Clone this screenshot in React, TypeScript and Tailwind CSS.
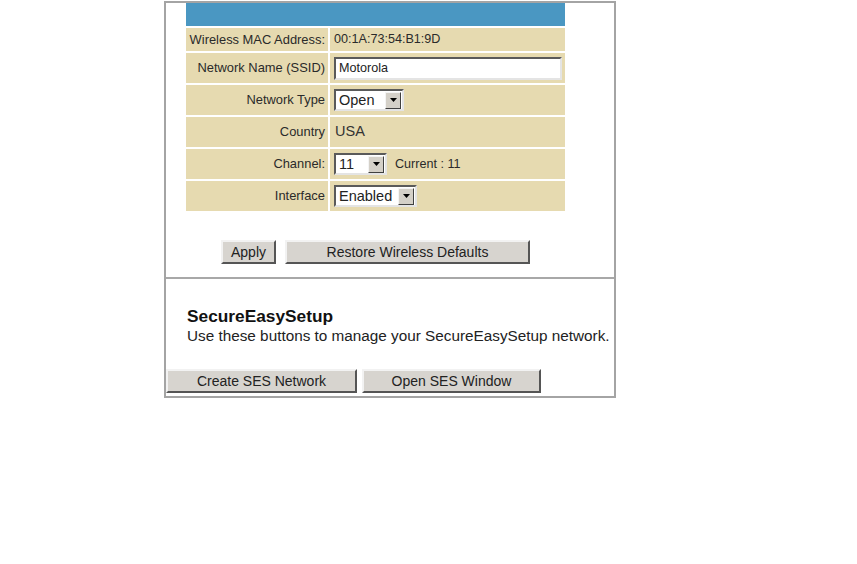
const font = { fontFamily: '"Liberation Sans", Arial, sans-serif' };

const Arrow = () => (
  <span className="flex h-[17px] w-[16px] items-center justify-center border border-t-[#f4f4f4] border-l-[#f4f4f4] border-b-[#404040] border-r-[#404040] bg-[#d4d0c8]">
    <svg width="7" height="4" viewBox="0 0 7 4">
      <path d="M0 0h7L3.5 4z" fill="#000" />
    </svg>
  </span>
);

const Select = ({ value, width }: { value: string; width: string }) => (
  <div className={`flex h-[22px] ${width} items-center justify-between border-2 border-t-[#5a5a5a] border-l-[#5a5a5a] border-b-[#e4e4e4] border-r-[#e4e4e4] bg-white pl-[3px] pr-[1px]`}>
    <span className="text-[14.5px] leading-none text-[#222]">{value}</span>
    <Arrow />
  </div>
);

const Row = ({ label, h, children }: { label: string; h: string; children: React.ReactNode }) => (
  <div className={`flex ${h} gap-[2px]`}>
    <div className="flex w-[142px] items-center justify-end bg-[#e6dab0] pr-[3px] text-[12.9px] text-[#2a2a2a]">{label}</div>
    <div className="flex flex-1 items-center gap-[8px] bg-[#e6dab0] pl-[4px]">{children}</div>
  </div>
);

const Btn = ({ label, w }: { label: string; w: string }) => (
  <button className={`flex h-[24px] ${w} items-center justify-center border-2 border-t-[#f2f2f2] border-l-[#f2f2f2] border-b-[#555] border-r-[#555] bg-[#d7d4cf] text-[14px] text-[#222]`}>
    {label}
  </button>
);

export default function App() {
  return (
    <div className="h-[564px] w-[857px] bg-white" style={font}>
      <div className="ml-[164px] mt-[1px] flex h-[397px] w-[452px] flex-col border-2 border-[#a4a4a4]">
        <div className="ml-[20px] flex w-[379px] flex-col gap-[2px]">
          <div className="h-[23px] bg-[#4a97c2]" />
          <Row label="Wireless MAC Address:" h="h-[23px]">
            <span className="text-[12.6px] text-[#2a2a2a]">00:1A:73:54:B1:9D</span>
          </Row>
          <Row label="Network Name (SSID)" h="h-[30px]">
            <div className="flex h-[23px] w-[228px] items-center border-2 border-t-[#5a5a5a] border-l-[#5a5a5a] border-b-[#e4e4e4] border-r-[#e4e4e4] bg-white pl-[3px] text-[12.6px] text-[#222]">
              Motorola
            </div>
          </Row>
          <Row label="Network Type" h="h-[30px]">
            <Select value="Open" width="w-[70px]" />
          </Row>
          <Row label="Country" h="h-[30px]">
            <span className="pl-[1px] text-[14.5px] text-[#333]">USA</span>
          </Row>
          <Row label="Channel:" h="h-[30px]">
            <Select value="11" width="w-[53px]" />
            <span className="text-[12.6px] text-[#2a2a2a]">Current : 11</span>
          </Row>
          <Row label="Interface" h="h-[30px]">
            <Select value="Enabled" width="w-[83px]" />
          </Row>
        </div>

        <div className="mt-[29px] flex gap-[9px] pl-[55px]">
          <Btn label="Apply" w="w-[55px]" />
          <Btn label="Restore Wireless Defaults" w="w-[245px]" />
        </div>

        <div className="mt-[13px] h-[2px] bg-[#a8a8a8]" />

        <div className="pl-[21px] pt-[27px]">
          <div className="text-[17.3px] font-bold leading-[20px] text-[#111]">SecureEasySetup</div>
          <div className="text-[15.3px] leading-[20px] text-[#222]">Use these buttons to manage your SecureEasySetup network.</div>
        </div>

        <div className="mt-[23px] flex gap-[5px]">
          <Btn label="Create SES Network" w="w-[191px]" />
          <Btn label="Open SES Window" w="w-[179px]" />
        </div>
      </div>
    </div>
  );
}
